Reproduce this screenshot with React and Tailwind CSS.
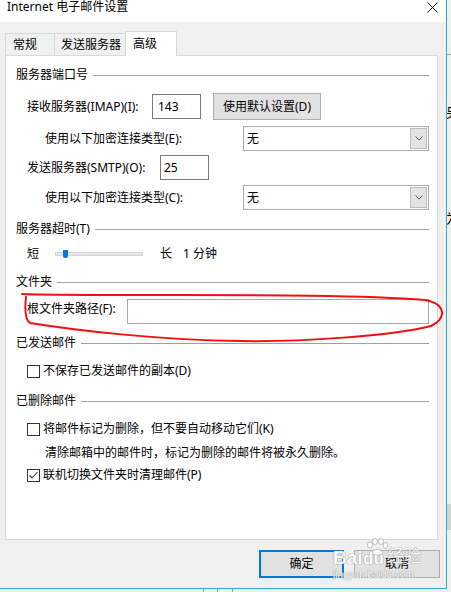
import { useState } from "react";

function Section({ title, className }) {
  return (
    <div className={`flex items-center h-[20px] ${className}`}>
      <span className="whitespace-nowrap">{title}</span>
      <div className="ml-[5px] flex-1 h-px bg-[#a0a0a0]" />
    </div>
  );
}

function Checkbox({ checked, label, className }) {
  return (
    <div className={`flex items-center h-[20px] pl-[11px] ${className}`}>
      <div className="w-[13px] h-[13px] border border-[#333] bg-white flex items-center justify-center">
        {checked && (
          <svg width="11" height="11" viewBox="0 0 11 11">
            <polyline points="1.5,5.5 4,8 9.5,2" fill="none" stroke="#333" strokeWidth="1.1" />
          </svg>
        )}
      </div>
      <span className="ml-[3px] whitespace-nowrap">{label}</span>
    </div>
  );
}

function Select({ value }) {
  return (
    <div className="flex-1 h-[25px] border border-[#ababab] bg-white flex items-center justify-between pl-[3px] pr-px">
      <span>{value}</span>
      <div className="w-[17px] h-[21px] bg-[#e3e3e3] border border-[#bcbcbc] flex items-center justify-center">
        <svg width="8" height="5" viewBox="0 0 8 5">
          <polyline points="0.5,0.5 4,4 7.5,0.5" fill="none" stroke="#555" strokeWidth="1" />
        </svg>
      </div>
    </div>
  );
}

export default function App() {
  const [checks] = useState({ noCopy: false, markDelete: false, purge: true });

  return (
    <div className="relative w-[451px] h-[592px] overflow-hidden bg-[#f0f0f0] text-black text-[12px] leading-[16px] [font-family:'Noto_Sans','Noto_Sans_CJK_SC',sans-serif]">
      <div className="flex">
        <div className="w-[447px] h-[589px] flex flex-col bg-[#f0f0f0] border-r border-b border-[#29b2c6]">
          {/* title bar */}
          <div className="h-[22px] bg-white flex items-start justify-between pl-[7px] pr-[8px]">
            <span className="leading-[14px]">Internet 电子邮件设置</span>
            <svg width="11" height="11" viewBox="0 0 11 11" className="mt-[2px]">
              <path d="M0.5 0.5 L10.5 10.5 M10.5 0.5 L0.5 10.5" stroke="#111" strokeWidth="1" />
            </svg>
          </div>

          {/* tabs */}
          <div className="relative z-10 mt-[9px] h-[24px] flex items-end pl-[5px]">
            <div className="w-[49px] h-[22px] border-l border-t border-[#d9d9d9] bg-[#f0f0f0] flex items-center pl-[7px]">常规</div>
            <div className="w-[71px] h-[22px] border-l border-t border-[#d9d9d9] bg-[#f0f0f0] flex items-center pl-[6px]">发送服务器</div>
            <div className="w-[52px] h-[25px] -mb-px border-l border-t border-r border-[#d9d9d9] bg-white flex items-center pl-[7px]">高级</div>
          </div>

          {/* panel */}
          <div className="ml-[5px] w-[433px] h-[485px] border border-[#d9d9d9] bg-white flex flex-col pl-[10px] pr-[8px] pt-[9px]">
            <Section title="服务器端口号" />

            <div className="mt-[8px] h-[27px] flex items-center pl-[11px]">
              <span className="w-[125px] whitespace-nowrap">接收服务器(IMAP)(I):</span>
              <div className="w-[49px] h-[25px] border border-[#7a7a7a] flex items-center pl-[5px]">143</div>
              <div className="ml-[12px] w-[108px] h-[27px] border border-[#adadad] bg-[#e1e1e1] flex items-center justify-center">
                使用默认设置(D)
              </div>
            </div>

            <div className="mt-[6px] h-[25px] flex items-center pl-[29px]">
              <span className="w-[198px] whitespace-nowrap">使用以下加密连接类型(E):</span>
              <Select value="无" />
            </div>

            <div className="mt-[4px] h-[25px] flex items-center pl-[11px]">
              <span className="w-[133px] whitespace-nowrap">发送服务器(SMTP)(O):</span>
              <div className="w-[49px] h-[25px] border border-[#7a7a7a] flex items-center pl-[3px]">25</div>
            </div>

            <div className="mt-[5px] h-[25px] flex items-center pl-[29px]">
              <span className="w-[198px] whitespace-nowrap">使用以下加密连接类型(C):</span>
              <Select value="无" />
            </div>

            <Section title="服务器超时(T)" className="mt-[9px]" />

            <div className="mt-[5px] h-[20px] flex items-center pl-[11px]">
              <span>短</span>
              <div className="relative ml-[16px] w-[88px] h-[4px] bg-[#e7e7e7] border border-[#d6d6d6]">
                <div className="absolute left-[7px] top-[-3px] w-[5px] h-[8px] bg-[#0078d7] rounded-b-[2px]" />
              </div>
              <span className="ml-[17px]">长</span>
              <span className="ml-[11px]">1 分钟</span>
            </div>

            <Section title="文件夹" className="mt-[8px]" />

            <div className="mt-[7px] h-[25px] flex items-center pl-[11px]">
              <span className="w-[100px] mb-[6px] whitespace-nowrap">根文件夹路径(F):</span>
              <div className="flex-1 h-[25px] border border-[#a9a9a9] bg-white" />
            </div>

            <Section title="已发送邮件" className="mt-[9px]" />
            <Checkbox checked={checks.noCopy} label="不保存已发送邮件的副本(D)" className="mt-[8px]" />

            <Section title="已删除邮件" className="mt-[10px]" />
            <Checkbox checked={checks.markDelete} label="将邮件标记为删除，但不要自动移动它们(K)" className="mt-[8px]" />
            <div className="mt-[4px] h-[20px] flex items-center pl-[29px] whitespace-nowrap">
              清除邮箱中的邮件时，标记为删除的邮件将被永久删除。
            </div>
            <Checkbox checked={checks.purge} label="联机切换文件夹时清理邮件(P)" className="mt-[2px]" />
          </div>

          {/* dialog buttons */}
          <div className="mt-[10px] flex justify-end gap-[10px] pr-[6px]">
            <div className="w-[85px] h-[28px] border-2 border-[#0078d7] bg-[#e1e1e1] flex items-center justify-center">确定</div>
            <div className="w-[86px] h-[28px] border border-[#adadad] bg-[#e1e1e1] flex items-center justify-center">取消</div>
          </div>
        </div>

        {/* sliver of the window behind */}
        <div className="w-[4px] h-[589px] overflow-hidden bg-[#efefef] flex flex-col">
          <div className="h-[55px] border-b border-[#a0a0a0]" />
          <div className="mt-[49px] -ml-px text-[13px] leading-[16px]">另</div>
          <div className="mt-[90px] -ml-px text-[13px] leading-[16px]">为</div>
          <div className="mt-[278px] h-[26px] bg-[#d2d2d2]" />
        </div>
      </div>

      {/* below the window */}
      <div className="h-[3px] flex bg-[#eeeeee]">
        <div className="ml-[203px] w-px bg-[#9a9a9a]" />
        <div className="ml-[13px] w-px bg-[#9a9a9a]" />
        <div className="ml-[14px] w-px bg-[#9a9a9a]" />
      </div>

      {/* hand-drawn red loop */}
      <svg className="absolute left-0 top-0 pointer-events-none" width="451" height="592" viewBox="0 0 451 592">
        <path
          d="M22 294 C120 297 330 292 425 300 C446 304 447 318 431 326 C392 336 300 342 240 341 C160 340 80 331 30 323 C24 319 25 306 26 297"
          fill="none"
          stroke="#f01010"
          strokeWidth="2"
          strokeLinecap="round"
        />
      </svg>

      {/* watermark */}
      <div className="absolute left-[333px] top-[537px] w-[92px] h-[44px] pointer-events-none opacity-90 text-white [text-shadow:0_0_1px_#8c8c8c,0_0_1px_#8c8c8c]">
        <svg className="absolute left-[31px] top-[1px]" width="26" height="18" viewBox="0 0 26 18">
          <g fill="#fff" stroke="#a8a8a8" strokeWidth="0.8">
            <ellipse cx="6" cy="7" rx="2.5" ry="3.2" />
            <ellipse cx="11" cy="3.5" rx="2.5" ry="3" />
            <ellipse cx="17" cy="3.5" rx="2.5" ry="3" />
            <ellipse cx="21.5" cy="7.5" rx="2.4" ry="3" />
            <path d="M8 15 C9 10 17 10 19 15 C18 18 9 18 8 15 Z" />
          </g>
        </svg>
        <span className="absolute left-0 top-[10px] text-[19px] leading-[22px] font-bold [font-family:'Liberation_Sans',sans-serif]">Bai</span>
        <span className="absolute left-[30px] top-[12px] text-[17px] leading-[20px] font-bold [font-family:'Liberation_Sans',sans-serif]">du</span>
        <span className="absolute left-[54px] top-[9px] text-[17px] leading-[20px]">经验</span>
        <span className="absolute left-0 top-[32px] text-[10px] leading-[11px] [font-family:'Liberation_Sans',sans-serif]">jingyan.baidu.com</span>
      </div>
    </div>
  );
}
